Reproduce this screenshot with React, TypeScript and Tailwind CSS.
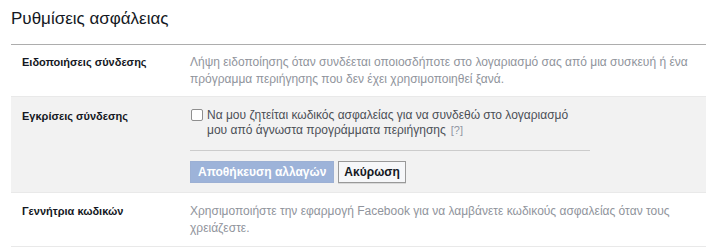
const FONT = "font-['Liberation_Sans',Arial,sans-serif]"

function Row({ label, children, className }: { label: string; children: React.ReactNode; className: string }) {
  return (
    <div className={`flex border-b border-[#e9e9e9] ${className}`}>
      <div className="w-[179px] shrink-0 pl-[11px] text-[11px] font-bold leading-[17px] text-[#141823]">{label}</div>
      <div className="flex-1 pr-[10px]">{children}</div>
    </div>
  )
}

export default function App() {
  return (
    <div className={`w-[706px] h-[252px] bg-white pl-[11px] ${FONT}`}>
      <h2 className="h-[44px] pt-[8px] text-[17px] leading-[22px] text-[#141823]">Ρυθμίσεις ασφάλειας</h2>
      <div className="border-t border-[#adadad]">
        <Row label="Ειδοποιήσεις σύνδεσης" className="pt-[9px] pb-[8px]">
          <p className="text-[12px] leading-[17px] text-[#90949c]">
            Λήψη ειδοποίησης όταν συνδέεται οποιοσδήποτε στο λογαριασμό σας από μια συσκευή ή ένα πρόγραμμα περιήγησης που δεν έχει χρησιμοποιηθεί ξανά.
          </p>
        </Row>
        <Row label="Εγκρίσεις σύνδεσης" className="bg-[#f2f2f2] pt-[11px] pb-[9px]">
          <div className="w-[400px]">
            <label className="flex items-start gap-[4px]">
              <span className="mt-[1px] ml-[1px] h-[12px] w-[12px] shrink-0 rounded-[2px] border border-[#8f8f8f] bg-white" />
              <div className="text-[12px] leading-[15px] text-[#4b4f56]">
                <div>Να μου ζητείται κωδικός ασφαλείας για να συνδεθώ στο λογαριασμό</div>
                <div className="flex gap-[5px]">
                  <span>μου από άγνωστα προγράμματα περιήγησης</span>
                  <span className="text-[11px] text-[#9197a3]">[?]</span>
                </div>
              </div>
            </label>
            <div className="mt-[12px] border-t border-[#cccccc]" />
            <div className="mt-[10px] flex gap-[4px]">
              <button className="h-[22px] border border-[#9cb0d4] bg-[#9db3d9] px-[7px] text-[12px] font-bold text-white">
                Αποθήκευση αλλαγών
              </button>
              <button className="h-[22px] border border-[#999999] bg-[#f6f7f9] px-[5px] text-[12px] font-bold text-[#141823] shadow-[0_1px_0_rgba(0,0,0,0.1)]">
                Ακύρωση
              </button>
            </div>
          </div>
        </Row>
        <Row label="Γεννήτρια κωδικών" className="pt-[10px] pb-[9px]">
          <p className="text-[12px] leading-[17px] text-[#90949c]">
            Χρησιμοποιήστε την εφαρμογή Facebook για να λαμβάνετε κωδικούς ασφαλείας όταν τους χρειάζεστε.
          </p>
        </Row>
      </div>
    </div>
  )
}
